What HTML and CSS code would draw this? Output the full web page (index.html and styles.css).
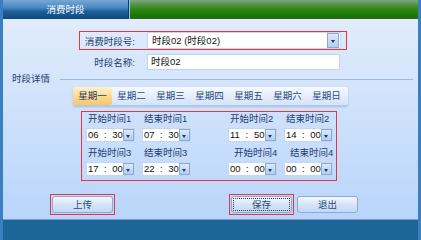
FILE: index.html
```html
<!DOCTYPE html>
<html lang="zh-CN">
<head>
  <meta charset="UTF-8">
  <title>消费时段</title>
  <link rel="stylesheet" href="styles.css">
</head>
<body>
  <div class="shell">
    <div class="titlebar">
      <div class="title-tab">消费时段</div>
      <div class="title-rest"></div>
    </div>

    <div class="panel">
      <div class="form-row marked">
        <label class="form-label">消费时段号:</label>
        <div class="select">
          <span class="select-text">时段02 (时段02)</span>
          <span class="drop-btn"><i class="caret"></i></span>
        </div>
      </div>
      <div class="form-row">
        <label class="form-label">时段名称:</label>
        <div class="text-input">时段02</div>
      </div>

      <div class="section-head">
        <span>时段详情</span>
        <div class="section-line"></div>
      </div>

      <div class="week-tabs">
        <div class="week-tab active">星期一</div>
        <div class="week-tab">星期二</div>
        <div class="week-tab">星期三</div>
        <div class="week-tab">星期四</div>
        <div class="week-tab">星期五</div>
        <div class="week-tab">星期六</div>
        <div class="week-tab">星期日</div>
      </div>

      <div class="time-box marked">
        <div class="time-row">
          <div class="time-cell">
            <div class="time-label">开始时间1</div>
            <div class="spin"><span class="hh">06</span><span class="sep">:</span><span class="mm">30</span><span class="drop-btn"><i class="caret"></i></span></div>
          </div>
          <div class="time-cell">
            <div class="time-label">结束时间1</div>
            <div class="spin"><span class="hh">07</span><span class="sep">:</span><span class="mm">30</span><span class="drop-btn"><i class="caret"></i></span></div>
          </div>
          <div class="time-cell">
            <div class="time-label">开始时间2</div>
            <div class="spin"><span class="hh">11</span><span class="sep">:</span><span class="mm">50</span><span class="drop-btn"><i class="caret"></i></span></div>
          </div>
          <div class="time-cell">
            <div class="time-label">结束时间2</div>
            <div class="spin"><span class="hh">14</span><span class="sep">:</span><span class="mm">00</span><span class="drop-btn"><i class="caret"></i></span></div>
          </div>
        </div>
        <div class="time-row">
          <div class="time-cell">
            <div class="time-label">开始时间3</div>
            <div class="spin"><span class="hh">17</span><span class="sep">:</span><span class="mm">00</span><span class="drop-btn"><i class="caret"></i></span></div>
          </div>
          <div class="time-cell">
            <div class="time-label">结束时间3</div>
            <div class="spin"><span class="hh">22</span><span class="sep">:</span><span class="mm">30</span><span class="drop-btn"><i class="caret"></i></span></div>
          </div>
          <div class="time-cell">
            <div class="time-label shifted">开始时间4</div>
            <div class="spin"><span class="hh">00</span><span class="sep">:</span><span class="mm">00</span><span class="drop-btn"><i class="caret"></i></span></div>
          </div>
          <div class="time-cell">
            <div class="time-label shifted">结束时间4</div>
            <div class="spin"><span class="hh">00</span><span class="sep">:</span><span class="mm">00</span><span class="drop-btn"><i class="caret"></i></span></div>
          </div>
        </div>
      </div>

      <div class="actions">
        <div class="btn-frame marked"><div class="btn">上传</div></div>
        <div class="btn-frame marked save"><div class="btn focused">保存</div></div>
        <div class="btn-frame exit"><div class="btn">退出</div></div>
      </div>
    </div>
  </div>
</body>
</html>
```

FILE: styles.css
```css
body {
  margin: 0;
  width: 421px;
  height: 240px;
  overflow: hidden;
  background-color: #1b6598;
  font-family: "Liberation Sans", "Noto Sans CJK SC", sans-serif;
  font-size: 9.5px;
  color: #1e3c6e;
}

.shell {
  height: 240px;
  box-sizing: border-box;
  border-left: 3px solid #3c7fc0;
  border-right: 3px solid #3c7fc0;
}

.titlebar {
  display: flex;
  height: 19px;
}

.title-tab {
  width: 125px;
  color: #fff;
  text-align: center;
  line-height: 19px;
  background: linear-gradient(#76a8d6, #4a88c0 40%, #1f5f97 60%, #0f4a80);
  border-right: 1px solid #0b3a66;
}

.title-rest {
  flex: 1;
  border-left: 1px solid #9cc0e4;
  background: linear-gradient(#7ea67e, #4e8c40 30%, #2a8a10 50%, #1a7308 85%, #2d6a18);
}

.panel {
  height: 200px;
  display: flex;
  flex-direction: column;
  align-items: flex-start;
  border-bottom: 1px solid #7d9dcc;
  background: linear-gradient(#e1ecfc, #b9d5fb);
}

.marked {
  border: 1px solid #e8343f !important;
}

/* top form */
.form-row {
  display: flex;
  align-items: center;
  margin: 3px 0 0 76px;
  padding-right: 5px;
  border: 1px solid transparent;
}

.form-row:first-child {
  margin-top: 12px;
}

.form-label {
  width: 55px;
  padding-right: 2px;
  margin-right: 10px;
  text-align: right;
  white-space: nowrap;
}

.select {
  display: flex;
  width: 194px;
  height: 17px;
  box-sizing: border-box;
  border: 1px solid #c9d8ec;
  background-color: #fff;
  color: #111;
}

.select-text {
  flex: 1;
  padding-left: 4px;
  line-height: 15px;
}

.select .drop-btn {
  margin: 0 1px 0 0;
}

.drop-btn {
  width: 12px;
  display: flex;
  align-items: center;
  justify-content: center;
  box-sizing: border-box;
  border: 1px solid #87a9d8;
  background: linear-gradient(#dce9fa, #b3cdf0);
}

.caret {
  width: 0;
  height: 0;
  border-left: 2.5px solid transparent;
  border-right: 2.5px solid transparent;
  border-top: 3px solid #1a3a6c;
  margin-top: 2px;
}

.text-input {
  width: 193px;
  height: 16px;
  margin-right: 1px;
  box-sizing: border-box;
  padding-left: 3px;
  line-height: 14px;
  border: 1px solid #c3d4ea;
  background-color: #fff;
  color: #111;
}

/* details */
.section-head {
  display: flex;
  align-items: center;
  width: 100%;
  height: 12px;
  box-sizing: border-box;
  margin-top: 1px;
  padding: 0 5px 0 9px;
}

.section-line {
  flex: 1;
  height: 1px;
  margin: 2px 0 0 10px;
  background-color: #a3b7d2;
}

.week-tabs {
  display: flex;
  width: 275px;
  height: 18px;
  margin: 3px 0 0 70px;
  border-radius: 2px;
  border-bottom: 1px solid #b3c9e8;
  background: linear-gradient(#f7faff, #d3e3f8);
  box-shadow: 0 1px 2px rgba(90, 120, 170, 0.35);
}

.week-tab {
  width: 39px;
  text-align: center;
  line-height: 18px;
  color: #2a4a80;
}

.week-tab.active {
  border-radius: 2px;
  color: #1e3a6a;
  background: linear-gradient(#fff2cf, #fbd88c 55%, #f6c66c);
}

.time-box {
  display: flex;
  flex-direction: column;
  gap: 4px;
  width: 256px;
  height: 70px;
  box-sizing: border-box;
  margin: 5px 0 0 78px;
  padding-left: 4px;
}

.time-row {
  display: flex;
}

.time-cell {
  width: 49px;
  margin-right: 7px;
}

.time-cell:nth-child(2) {
  margin-right: 37px;
}

.time-label {
  height: 14px;
  line-height: 14px;
  margin-bottom: 2px;
  padding-left: 2px;
  white-space: nowrap;
}

.time-label.shifted {
  padding-left: 6px;
}

.spin {
  display: flex;
  height: 14px;
  box-sizing: border-box;
  border: 1px solid #c6d6ec;
  background-color: #fff;
  color: #111;
  line-height: 12px;
}

.hh {
  padding-left: 1px;
}

.sep {
  width: 15px;
  text-align: center;
}

.mm {
  flex: 1;
}

/* buttons */
.actions {
  display: flex;
  margin: 13px 0 0 47px;
}

.btn-frame {
  padding: 1px;
  border: 1px solid transparent;
}

.save {
  margin-left: 114px;
}

.exit {
  margin-left: 1px;
}

.btn {
  width: 61px;
  height: 17px;
  box-sizing: border-box;
  border: 1px solid #8eaad2;
  border-radius: 3px;
  text-align: center;
  line-height: 15px;
  color: #2b4a7a;
  background: linear-gradient(#f3f8ff, #d5e4f8 50%, #c3d8f4);
}

.btn.focused {
  outline: 1px dotted #404040;
  outline-offset: -3px;
}
```
